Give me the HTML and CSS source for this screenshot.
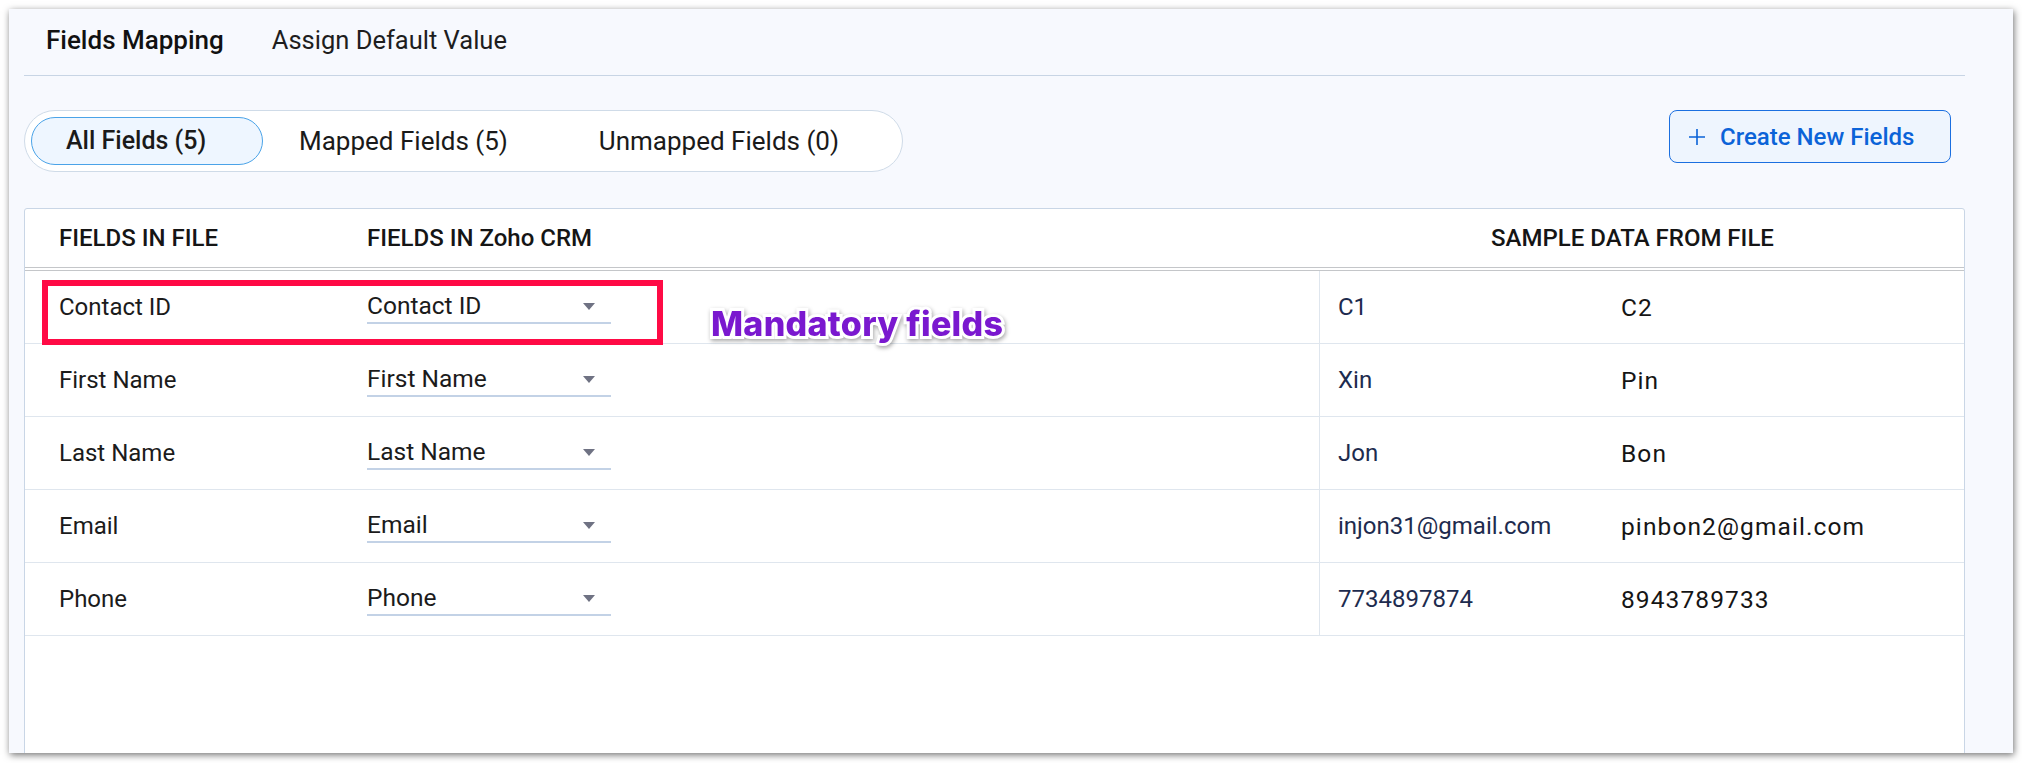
FILE: index.html
```html
<!DOCTYPE html>
<html lang="en">
<head>
<meta charset="utf-8">
<title>Fields Mapping</title>
<link rel="stylesheet" href="styles.css">
</head>
<body>
<div class="frame">
  <div class="content">
    <nav class="tabs">
      <span class="tab tab-active">Fields Mapping</span>
      <span class="tab">Assign Default Value</span>
    </nav>

    <div class="toolbar">
      <div class="segment">
        <span class="seg seg-active">All Fields (5)</span>
        <span class="seg">Mapped Fields (5)</span>
        <span class="seg">Unmapped Fields (0)</span>
      </div>
      <button class="create">
        <svg class="plus" width="18" height="18" viewBox="0 0 18 18"><path d="M9 1v16M1 9h16" stroke="currentColor" stroke-width="1.6" fill="none"/></svg>
        Create New Fields
      </button>
    </div>

    <div class="table">
      <div class="thead">
        <div class="th th-file">FIELDS IN FILE</div>
        <div class="th th-crm">FIELDS IN Zoho CRM</div>
        <div class="th th-sample">SAMPLE DATA FROM FILE</div>
      </div>

      <div class="row row-first">
        <div class="cell c-file">Contact ID</div>
        <div class="cell c-crm"><div class="dropdown"><span>Contact ID</span><svg class="caret" width="14" height="9" viewBox="0 0 14 9"><path d="M1 1h12L7 8z" fill="#6f7283"/></svg></div></div>
        <div class="cell c-s1">C1</div>
        <div class="cell c-s2">C2</div>
        <div class="mandatory-box"></div>
        <div class="mandatory-label">Mandatory fields</div>
      </div>
      <div class="row">
        <div class="cell c-file">First Name</div>
        <div class="cell c-crm"><div class="dropdown"><span>First Name</span><svg class="caret" width="14" height="9" viewBox="0 0 14 9"><path d="M1 1h12L7 8z" fill="#6f7283"/></svg></div></div>
        <div class="cell c-s1">Xin</div>
        <div class="cell c-s2">Pin</div>
      </div>
      <div class="row">
        <div class="cell c-file">Last Name</div>
        <div class="cell c-crm"><div class="dropdown"><span>Last Name</span><svg class="caret" width="14" height="9" viewBox="0 0 14 9"><path d="M1 1h12L7 8z" fill="#6f7283"/></svg></div></div>
        <div class="cell c-s1">Jon</div>
        <div class="cell c-s2">Bon</div>
      </div>
      <div class="row">
        <div class="cell c-file">Email</div>
        <div class="cell c-crm"><div class="dropdown"><span>Email</span><svg class="caret" width="14" height="9" viewBox="0 0 14 9"><path d="M1 1h12L7 8z" fill="#6f7283"/></svg></div></div>
        <div class="cell c-s1">injon31@gmail.com</div>
        <div class="cell c-s2">pinbon2@gmail.com</div>
      </div>
      <div class="row">
        <div class="cell c-file">Phone</div>
        <div class="cell c-crm"><div class="dropdown"><span>Phone</span><svg class="caret" width="14" height="9" viewBox="0 0 14 9"><path d="M1 1h12L7 8z" fill="#6f7283"/></svg></div></div>
        <div class="cell c-s1">7734897874</div>
        <div class="cell c-s2">8943789733</div>
      </div>
      <div class="table-empty"></div>
    </div>
  </div>
</div>
</body>
</html>
```

FILE: styles.css
```css
* { box-sizing: border-box; }

html, body {
  margin: 0;
  padding: 0;
  background: #ffffff;
}

body {
  font-family: Roboto, "Liberation Sans", Arial, sans-serif;
  color: #1b1b1b;
  width: 2022px;
  height: 763px;
  overflow: hidden;
}

.frame {
  margin: 9px 0 0 9px;
  width: 2004px;
  height: 744px;
  background: #f7f9fe;
  overflow: hidden;
  box-shadow: 1px 2px 7px rgba(0, 0, 0, 0.55);
}

.content {
  padding: 0 48px 0 15px;
}

/* ---------- top tabs ---------- */
.tabs {
  display: flex;
  align-items: center;
  gap: 48px;
  height: 67px;
  padding-left: 22px;
  padding-bottom: 5px;
  border-bottom: 1px solid #c8d5e5;
}

.tab {
  font-size: 25.5px;
  color: #1e1e1e;
}

.tab-active {
  font-weight: 500;
  font-size: 26px;
  color: #111;
}

/* ---------- toolbar ---------- */
.toolbar {
  display: flex;
  justify-content: space-between;
  align-items: flex-start;
  margin-top: 34px;
  padding-right: 14px;
}

.segment {
  display: flex;
  align-items: center;
  height: 62px;
  width: 879px;
  padding: 0 6px;
  background: #ffffff;
  border: 1px solid #cfdbe8;
  border-radius: 31px;
}

.seg {
  font-size: 26px;
  color: #1a1a1a;
  height: 48px;
  line-height: 46px;
  border: 1.5px solid transparent;
  border-radius: 24px;
  white-space: nowrap;
}

.seg-active {
  width: 232px;
  padding: 0 0 0 34px;
  background: #eef6ff;
  border-color: #4aa3e8;
  font-weight: 500;
  font-size: 25px;
}

.seg:nth-child(2) { padding-left: 35px; padding-right: 36px; }
.seg:nth-child(3) { padding-left: 53px; }

.create {
  display: flex;
  align-items: center;
  gap: 14px;
  height: 53px;
  width: 282px;
  padding: 0 0 0 18px;
  background: #eef5fe;
  border: 1.5px solid #1b6fe0;
  border-radius: 8px;
  color: #0b63d8;
  font-family: Roboto, "Liberation Sans", Arial, sans-serif;
  font-size: 24px;
  font-weight: 500;
  cursor: pointer;
}

.plus { flex: none; }

/* ---------- table ---------- */
.table {
  margin-top: 36px;
  background: #ffffff;
  border: 1px solid #c9d6e6;
  border-radius: 3px;
  font-size: 24px;
}

.thead {
  display: grid;
  grid-template-columns: 342px 952px 1fr;
  align-items: center;
  height: 62px;
  border-bottom: 4px double #c4c6c9;
}

.th {
  font-weight: 500;
  color: #151515;
  font-size: 24px;
}

.th-file { padding-left: 34px; }
.th-sample { text-align: center; padding-right: 18px; }

.row {
  position: relative;
  display: grid;
  grid-template-columns: 342px 952px 302px 1fr;
  height: 73px;
  border-bottom: 1.5px solid #dfe6ee;
}

.cell {
  display: flex;
  align-items: center;
  color: #1b1b1b;
}

.c-file { padding-left: 34px; }

.c-crm { align-items: flex-start; }

.c-s1 {
  padding-left: 18px;
  border-left: 1.5px solid #dfe6ee;
  color: #1d2b4e;
}

.c-s2 {
  color: #151515;
  font-size: 24.5px;
  letter-spacing: 1.1px;
}

.dropdown {
  display: flex;
  align-items: center;
  justify-content: space-between;
  width: 244px;
  height: 34px;
  margin-top: 19px;
  padding: 0 15px 0 0;
  border-bottom: 2px solid #c3d2e6;
  font-size: 24.5px;
}

.dropdown span { line-height: 30px; }

.table-empty { height: 140px; }

/* ---------- annotation ---------- */
.mandatory-box {
  position: absolute;
  left: 17px;
  top: 9px;
  width: 621px;
  height: 65px;
  border: 6px solid #ff0a45;
  pointer-events: none;
}

.mandatory-label {
  position: absolute;
  left: 686px;
  top: 33px;
  font-family: Inter, "Open Sans", sans-serif;
  font-weight: 800;
  font-size: 34px;
  line-height: 40px;
  letter-spacing: 0.3px;
  color: #7a18cf;
  -webkit-text-stroke: 6px #ffffff;
  paint-order: stroke fill;
  filter: drop-shadow(1px 2px 2px rgba(0, 0, 0, 0.35));
  white-space: nowrap;
}
```
